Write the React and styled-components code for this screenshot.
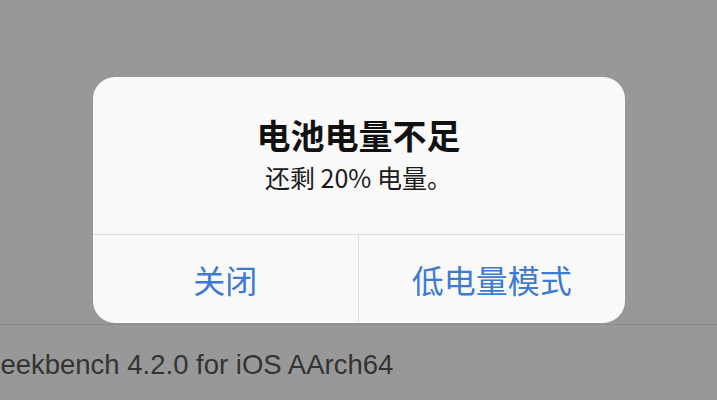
import styled, { createGlobalStyle } from "styled-components"

const GlobalStyle = createGlobalStyle`
    html, body {
        margin: 0;
        padding: 0;
        background: #989898;
    }
`

const Screen = styled.div`
    width: 717px;
    height: 400px;
    overflow: hidden;
    display: flex;
    flex-direction: column;
    padding-top: 77px;
    box-sizing: border-box;
    background: #989898;
    font-family: "Noto Sans CJK SC", "Noto Sans", sans-serif;
`

const Alert = styled.div`
    width: 532px;
    height: 246px;
    margin: 0 auto;
    border-radius: 22px;
    background: #f9f9f9;
    display: flex;
    flex-direction: column;
    overflow: hidden;
`

const Message = styled.div`
    height: 158px;
    box-sizing: border-box;
    padding-top: 38px;
    display: flex;
    flex-direction: column;
    align-items: center;
    border-bottom: 1px solid #dedede;
`

const Title = styled.div`
    font-size: 34px;
    line-height: 40px;
    font-weight: 700;
    color: #111111;
`

const Body = styled.div`
    margin-top: 6px;
    font-size: 25px;
    line-height: 32px;
    color: #1a1a1a;
`

const Actions = styled.div`
    flex: 1;
    display: flex;
`

const Action = styled.div`
    flex: 1;
    display: flex;
    align-items: center;
    justify-content: center;
    font-size: 32px;
    color: #3d7ad2;
    border-left: ${(p) => (p.$divided ? "1px solid #e0e0e0" : "none")};
`

const Footer = styled.div`
    margin-top: 1px;
    border-top: 1px solid #8a8a8a;
    padding-top: 20px;
    font-family: "Liberation Sans", Arial, sans-serif;
    font-size: 27.5px;
    line-height: 40px;
    color: #333333;
    white-space: nowrap;
    text-indent: -21px;
`

const App = () => {
    return (
        <Screen>
            <GlobalStyle />
            <Alert>
                <Message>
                    <Title>电池电量不足</Title>
                    <Body>还剩 20% 电量。</Body>
                </Message>
                <Actions>
                    <Action>关闭</Action>
                    <Action $divided>低电量模式</Action>
                </Actions>
            </Alert>
            <Footer>Geekbench 4.2.0 for iOS AArch64</Footer>
        </Screen>
    )
}

export default App
